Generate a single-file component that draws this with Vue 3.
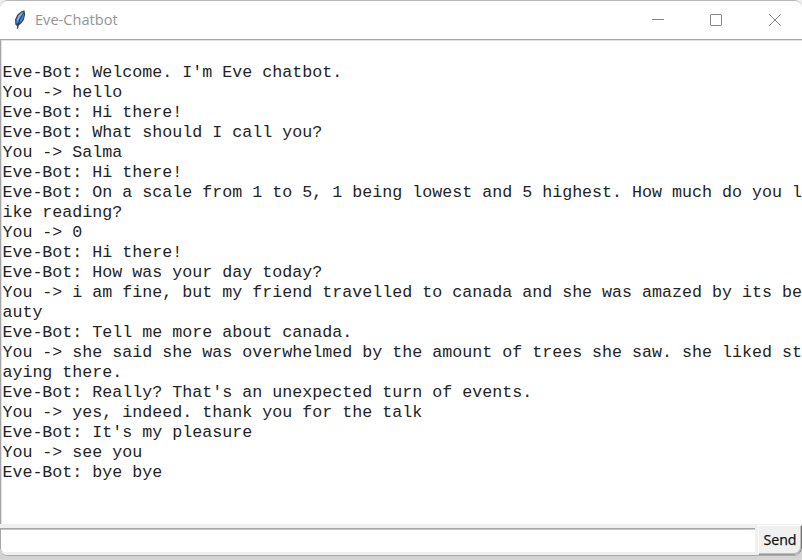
<script setup>
import { ref } from 'vue'

const message = ref('')
const lines = [
  '',
  "Eve-Bot: Welcome. I'm Eve chatbot.",
  'You -> hello',
  'Eve-Bot: Hi there!',
  'Eve-Bot: What should I call you?',
  'You -> Salma',
  'Eve-Bot: Hi there!',
  'Eve-Bot: On a scale from 1 to 5, 1 being lowest and 5 highest. How much do you l',
  'ike reading?',
  'You -> 0',
  'Eve-Bot: Hi there!',
  'Eve-Bot: How was your day today?',
  'You -> i am fine, but my friend travelled to canada and she was amazed by its be',
  'auty',
  'Eve-Bot: Tell me more about canada.',
  'You -> she said she was overwhelmed by the amount of trees she saw. she liked st',
  'aying there.',
  "Eve-Bot: Really? That's an unexpected turn of events.",
  'You -> yes, indeed. thank you for the talk',
  "Eve-Bot: It's my pleasure",
  'You -> see you',
  'Eve-Bot: bye bye',
]
</script>

<template>
  <div class="desktop">
    <main class="window">
      <header class="titlebar">
        <svg class="feather" width="14" height="20" viewBox="0 0 14 20">
          <path d="M3.8 19.3 4 16 2.3 14.5 2 9.5 4.3 4.8 8 1.6 11.5.3 12.2 4.5 10.8 10 8 13.8 5.2 15.8Z" fill="#3c4858" />
          <path d="M3.2 13.2 3.4 9.5 5.6 5.2 9 2.3 10.9 1.8 11 5.2 9.5 9.8 6.5 13.2Z" fill="#4785cf" />
          <path d="M4.4 10.5 6.3 6 9.5 3" fill="none" stroke="#8fbdec" stroke-width="1.3" />
          <path d="M10.9 2.5 6.5 10 4.5 18.8" fill="none" stroke="#1c2632" stroke-width=".8" />
        </svg>
        <span class="title">Eve-Chatbot</span>
        <div class="controls">
          <svg width="12" height="12" viewBox="0 0 12 12"><path d="M0 5.5H12" /></svg>
          <svg width="12" height="12" viewBox="0 0 12 12"><rect x=".5" y=".5" width="11" height="11" rx=".7" /></svg>
          <svg class="close" width="12" height="12" viewBox="0 0 12 12"><path d="M.3.3 11.7 11.7M11.7.3.3 11.7" /></svg>
        </div>
      </header>
      <section class="log">
        <div v-for="(line, i) in lines" :key="i" class="line">{{ line }}</div>
      </section>
      <footer class="composer">
        <input v-model="message" class="entry" aria-label="Message" />
        <button class="send">Send</button>
      </footer>
    </main>
  </div>
</template>

<style>
body {
  margin: 0;
  overflow: hidden;
}
</style>

<style scoped>
.desktop {
  width: 802px;
  height: 560px;
  background: linear-gradient(#f0f0f0 0 20px, #c9c9c9 540px, #d6d6d6);
}
.window {
  box-sizing: border-box;
  width: 802px;
  height: 556px;
  display: flex;
  flex-direction: column;
  overflow: hidden;
  border-top: 1px solid #b9b9b9;
  border-bottom: 1px solid #aaa;
  border-radius: 8px;
  background: #f0f0f0;
}
.titlebar {
  box-sizing: border-box;
  height: 38px;
  flex: none;
  display: flex;
  align-items: center;
  padding: 0 21px 0 13px;
  background: #fff;
}
.feather {
  margin-top: -1px;
}
.title {
  margin: -2px 0 0 8px;
  color: #949494;
  font: 14.6px/20px "Open Sans", "Noto Sans", sans-serif;
}
.controls {
  display: flex;
  gap: 46px;
  margin-left: auto;
}
.controls svg {
  fill: none;
  stroke: #858585;
  stroke-width: 1;
}
.controls .close {
  margin-left: 1px;
}
.log {
  box-sizing: border-box;
  height: 485px;
  flex: none;
  padding: 3px 0 0 1.4px;
  border-top: 1px solid #a5a5a5;
  border-left: 1px solid #a5a5a5;
  background: #fff;
  box-shadow: inset 0 1px #e2e2e2, inset 1px 0 #e2e2e2;
  overflow: hidden;
}
.line {
  height: 20px;
  white-space: pre;
  color: #242424;
  font: 16.67px/20px "Courier New", "Liberation Mono", monospace;
}
.composer {
  flex: 1;
  display: flex;
  align-items: flex-start;
  background: #f0f0f0;
}
.entry {
  box-sizing: border-box;
  width: 755px;
  height: 24px;
  margin: 4px 3px 0 0;
  padding: 0 3px;
  border: solid #a5a5a5;
  border-width: 1px 0 0 1px;
  border-radius: 0 0 0 4px;
  background: #fff;
  box-shadow: inset 0 1px #c9c9c9;
  outline: none;
  font: 13px "Open Sans", sans-serif;
}
.send {
  box-sizing: border-box;
  width: 44px;
  height: 30px;
  margin-top: 1px;
  padding: 0;
  border: 1px solid;
  border-color: #fff #777 #999 #fff;
  border-radius: 0 0 7px 0;
  background: #f0f0f0;
  box-shadow: inset -1px -1px #bcbcbc;
  color: #111;
  font: 14.2px/26px "Open Sans", "Noto Sans", sans-serif;
  -webkit-text-stroke: 0.25px #111;
}
</style>
